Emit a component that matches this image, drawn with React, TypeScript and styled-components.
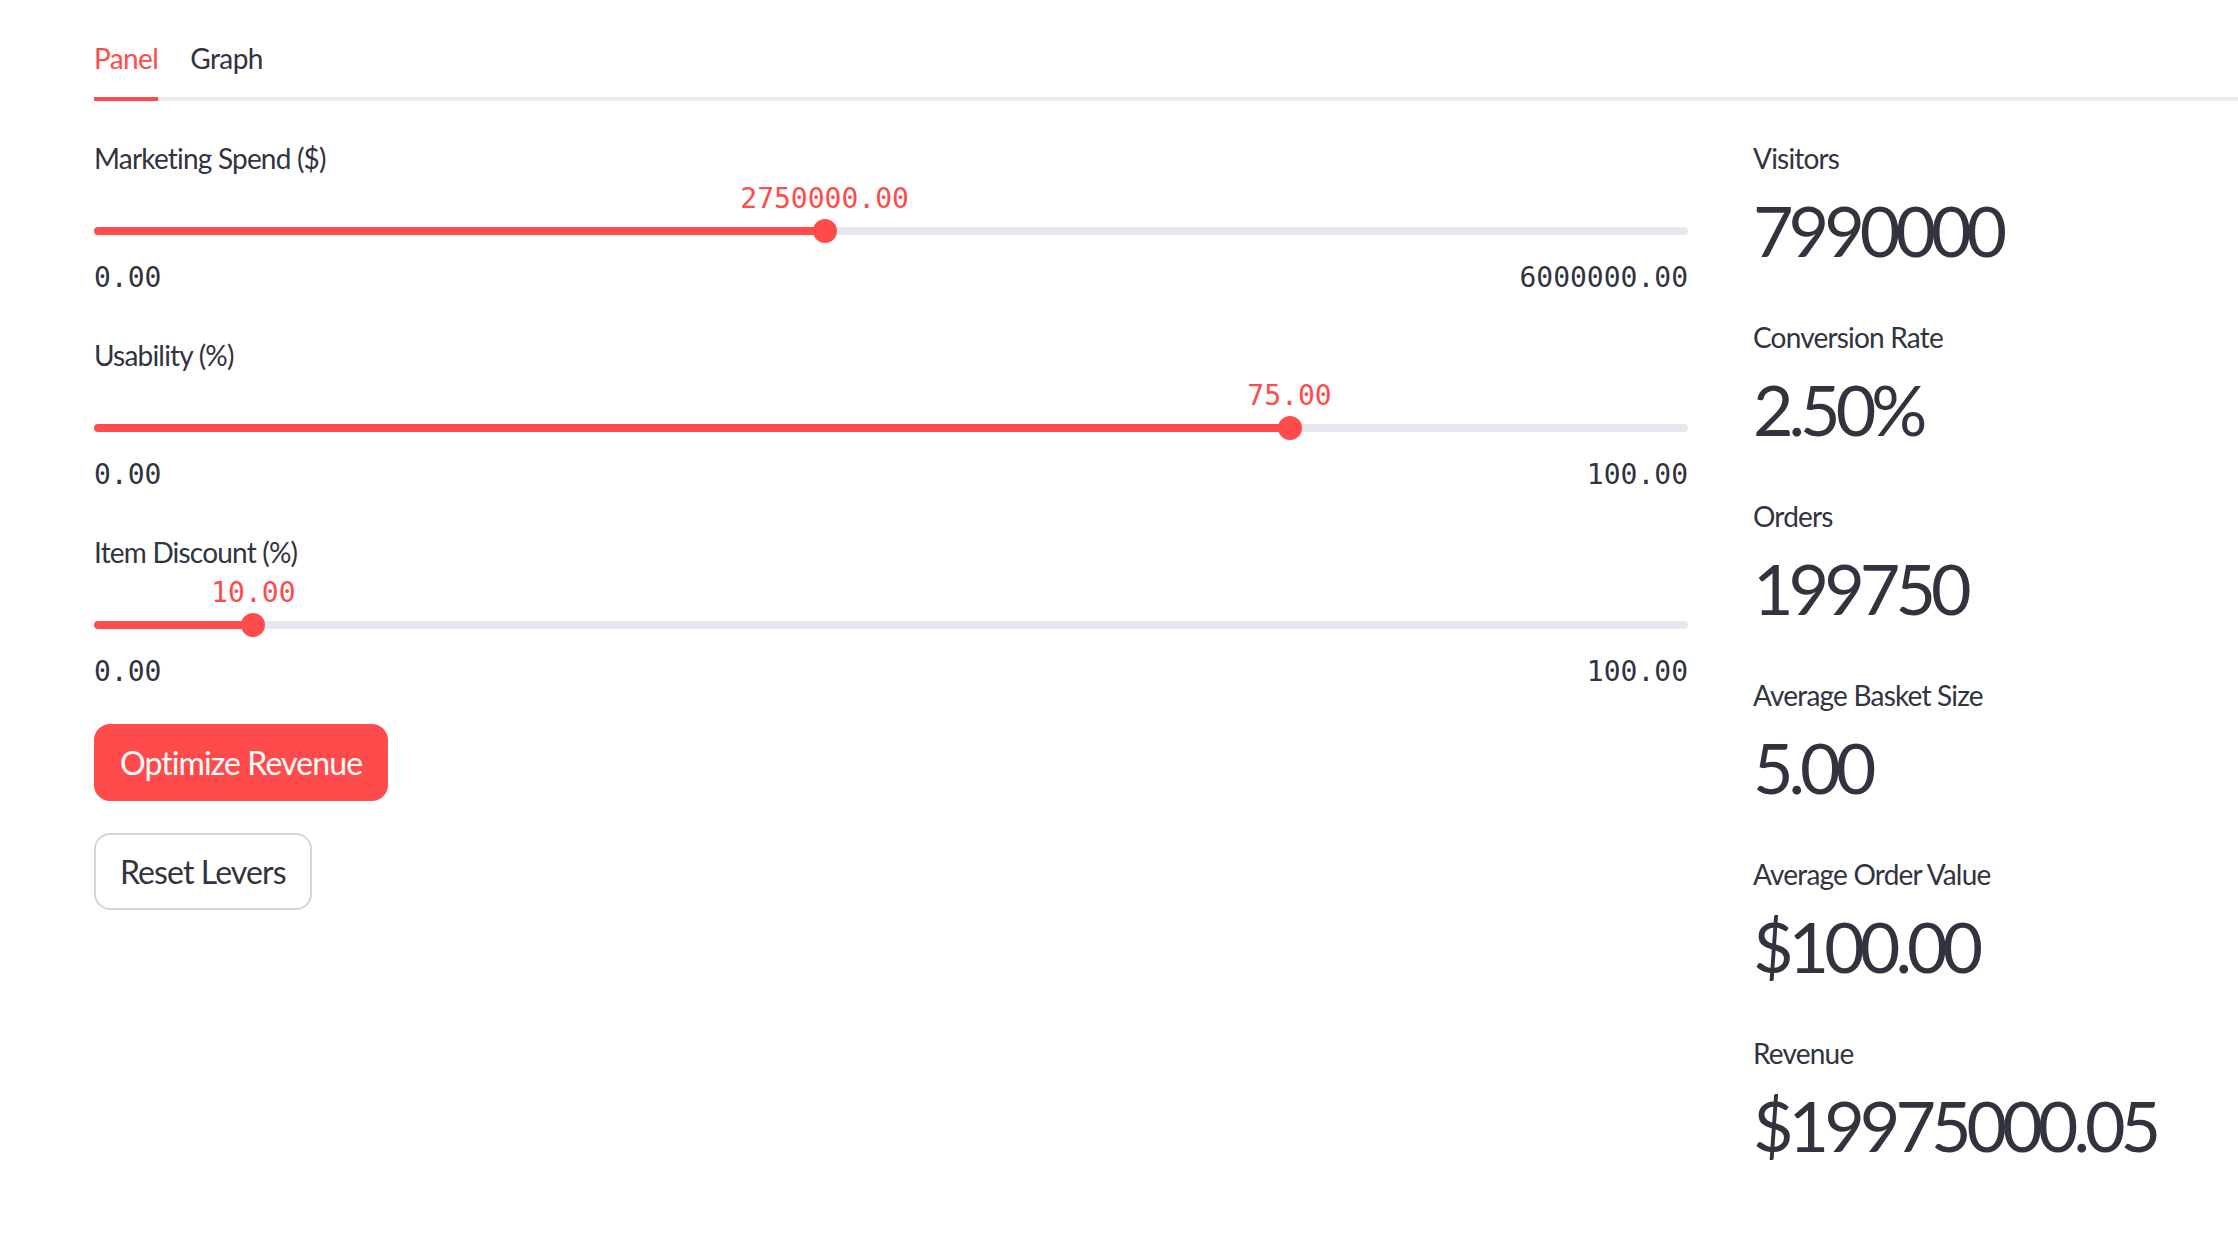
import styled, { createGlobalStyle } from "styled-components";

const GlobalStyle = createGlobalStyle`
  html, body {
    margin: 0;
    padding: 0;
    background: #ffffff;
  }
  body {
    font-family: Lato, "Open Sans", sans-serif;
    color: #31333f;
  }
`;

const RED = "#ff4b4b";
const TEXT = "#31333f";
const TRACK = "#e5e8ef";

const Page = styled.div({
  width: "2238px",
  height: "1256px",
  boxSizing: "border-box",
  paddingLeft: "94px",
  paddingTop: "36px",
  overflow: "hidden",
});

const TabList = styled.div({
  display: "flex",
  gap: "32px",
  borderBottom: "4px solid #eaeaea",
});

const Tab = styled.div<{ $active?: boolean }>(({ $active }) => ({
  fontSize: "28px",
  lineHeight: "45px",
  paddingBottom: "16px",
  marginBottom: "-4px",
  borderBottom: `4px solid ${$active ? RED : "transparent"}`,
  color: $active ? RED : TEXT,
  letterSpacing: "-0.6px",
}));

const Columns = styled.div({
  display: "flex",
  gap: "65px",
  paddingTop: "37px",
});

const LeftColumn = styled.div({
  flex: "0 0 1594px",
  display: "flex",
  flexDirection: "column",
});

const RightColumn = styled.div({
  flex: "1",
  display: "flex",
  flexDirection: "column",
  gap: "35px",
});

const SliderBlock = styled.div({
  display: "flex",
  flexDirection: "column",
  marginBottom: "39px",
});

const FieldLabel = styled.div({
  fontSize: "28px",
  lineHeight: "40px",
  height: "40px",
  color: TEXT,
  letterSpacing: "-0.8px",
  whiteSpace: "nowrap",
});

const ThumbValueRow = styled.div({
  position: "relative",
  height: "36px",
});

const ThumbValue = styled.div({
  position: "absolute",
  top: "3px",
  transform: "translateX(-50%)",
  fontFamily: '"DejaVu Sans Mono", "Liberation Mono", monospace',
  fontSize: "28px",
  lineHeight: "36px",
  color: RED,
  whiteSpace: "nowrap",
});

const TrackArea = styled.div({
  position: "relative",
  height: "30px",
  marginTop: "2px",
  display: "flex",
  alignItems: "center",
});

const Track = styled.div({
  width: "100%",
  height: "8px",
  borderRadius: "4px",
});

const Thumb = styled.div({
  position: "absolute",
  top: "3px",
  width: "24px",
  height: "24px",
  marginLeft: "-12px",
  borderRadius: "50%",
  background: RED,
});

const TickRow = styled.div({
  display: "flex",
  justifyContent: "space-between",
  marginTop: "14px",
  fontFamily: '"DejaVu Sans Mono", "Liberation Mono", monospace',
  fontSize: "28px",
  lineHeight: "36px",
  color: TEXT,
});

const ButtonStack = styled.div({
  display: "flex",
  flexDirection: "column",
  alignItems: "flex-start",
  gap: "32px",
  marginTop: "-5px",
});

const Button = styled.button<{ $primary?: boolean }>(({ $primary }) => ({
  height: "77px",
  boxSizing: "border-box",
  padding: "0 24px",
  borderRadius: "16px",
  border: `2px solid ${$primary ? RED : "#d6d6d9"}`,
  background: $primary ? RED : "#ffffff",
  color: $primary ? "#ffffff" : TEXT,
  fontFamily: 'Lato, "Open Sans", sans-serif',
  fontSize: "32px",
  letterSpacing: "-0.9px",
  cursor: "pointer",
}));

const Metric = styled.div({
  display: "flex",
  flexDirection: "column",
});

const MetricValue = styled.div({
  fontSize: "70px",
  lineHeight: "104px",
  height: "104px",
  color: TEXT,
  letterSpacing: "-5px",
  whiteSpace: "nowrap",
});

type SliderProps = {
  label: string;
  value: number;
  min: number;
  max: number;
};

const LeverSlider = ({ label, value, min, max }: SliderProps) => {
  const pct = ((value - min) / (max - min)) * 100;
  return <SliderBlock>
    <FieldLabel>{label}</FieldLabel>
    <ThumbValueRow>
      <ThumbValue style={{ left: `${pct}%` }}>{value.toFixed(2)}</ThumbValue>
    </ThumbValueRow>
    <TrackArea>
      <Track style={{ background: `linear-gradient(to right, ${RED} ${pct}%, ${TRACK} ${pct}%)` }} />
      <Thumb style={{ left: `${pct}%` }} />
    </TrackArea>
    <TickRow>
      <span>{min.toFixed(2)}</span>
      <span>{max.toFixed(2)}</span>
    </TickRow>
  </SliderBlock>;
};

const sliders: SliderProps[] = [
  { label: "Marketing Spend ($)", value: 2750000, min: 0, max: 6000000 },
  { label: "Usability (%)", value: 75, min: 0, max: 100 },
  { label: "Item Discount (%)", value: 10, min: 0, max: 100 },
];

const metrics = [
  { label: "Visitors", value: "7990000" },
  { label: "Conversion Rate", value: "2.50%" },
  { label: "Orders", value: "199750" },
  { label: "Average Basket Size", value: "5.00" },
  { label: "Average Order Value", value: "$100.00" },
  { label: "Revenue", value: "$19975000.05" },
];

export default function App() {
  return <>
    <GlobalStyle />
    <Page>
      <TabList>
        <Tab $active>Panel</Tab>
        <Tab>Graph</Tab>
      </TabList>
      <Columns>
        <LeftColumn>
          {sliders.map((s) => <LeverSlider key={s.label} {...s} />)}
          <ButtonStack>
            <Button $primary>Optimize Revenue</Button>
            <Button>Reset Levers</Button>
          </ButtonStack>
        </LeftColumn>
        <RightColumn>
          {metrics.map((m) => <Metric key={m.label}>
            <FieldLabel>{m.label}</FieldLabel>
            <MetricValue>{m.value}</MetricValue>
          </Metric>)}
        </RightColumn>
      </Columns>
    </Page>
  </>;
}
